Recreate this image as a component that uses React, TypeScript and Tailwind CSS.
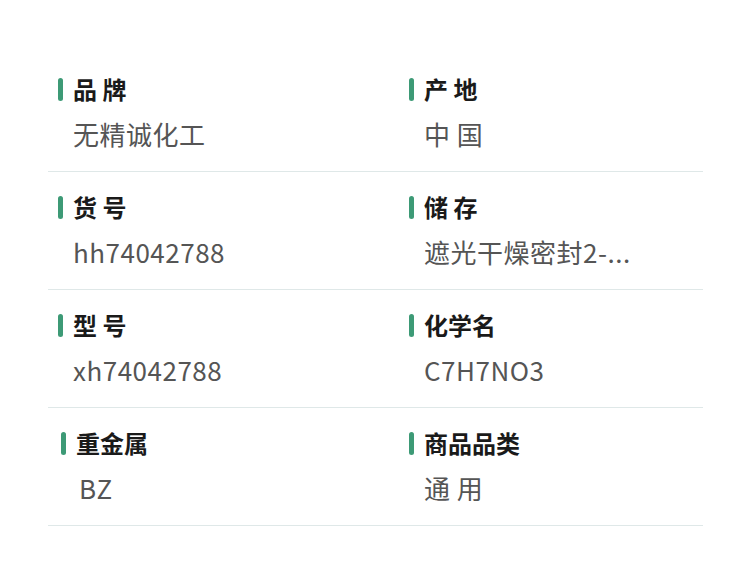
const font = { fontFamily: '"Noto Sans CJK SC", "Noto Sans", sans-serif' };

type Spec = { label: string; value: string; nudge?: boolean };

const rows: [Spec, Spec][] = [
    [{ label: '品 牌', value: '无精诚化工' }, { label: '产 地', value: '中 国' }],
    [{ label: '货 号', value: 'hh74042788' }, { label: '储 存', value: '遮光干燥密封2-...' }],
    [{ label: '型 号', value: 'xh74042788' }, { label: '化学名', value: 'C7H7NO3' }],
    [{ label: '重金属', value: 'BZ', nudge: true }, { label: '商品品类', value: '通 用' }],
];

function Cell({ spec }: { spec: Spec }) {
    return (
        <div className={`flex flex-col ${spec.nudge ? 'pl-[13px]' : 'pl-[10px]'}`}>
            <div className="flex items-center h-[24px] mt-[23px]">
                <span className="w-[5px] h-[23px] rounded-full bg-[#3d9a76]" />
                <span className="ml-[10px] text-[24px] leading-[24px] font-bold text-[#1a1a1a]">
                    {spec.label}
                </span>
            </div>
            <div className={`mt-[20px] text-[26px] leading-[26px] tracking-[0.5px] text-[#555555] ${spec.nudge ? 'pl-[18px]' : 'pl-[15px]'}`}>
                {spec.value}
            </div>
        </div>
    );
}

export default function App() {
    return (
        <div className="w-[750px] h-[570px] bg-white pt-[54px] px-[48px]" style={font}>
            <div className="w-[655px]">
                {rows.map((pair, i) => (
                    <div
                        key={i}
                        className="grid grid-cols-[351px_1fr] h-[118px] border-b border-[#dfe8e8]"
                    >
                        <Cell spec={pair[0]} />
                        <Cell spec={pair[1]} />
                    </div>
                ))}
            </div>
        </div>
    );
}
